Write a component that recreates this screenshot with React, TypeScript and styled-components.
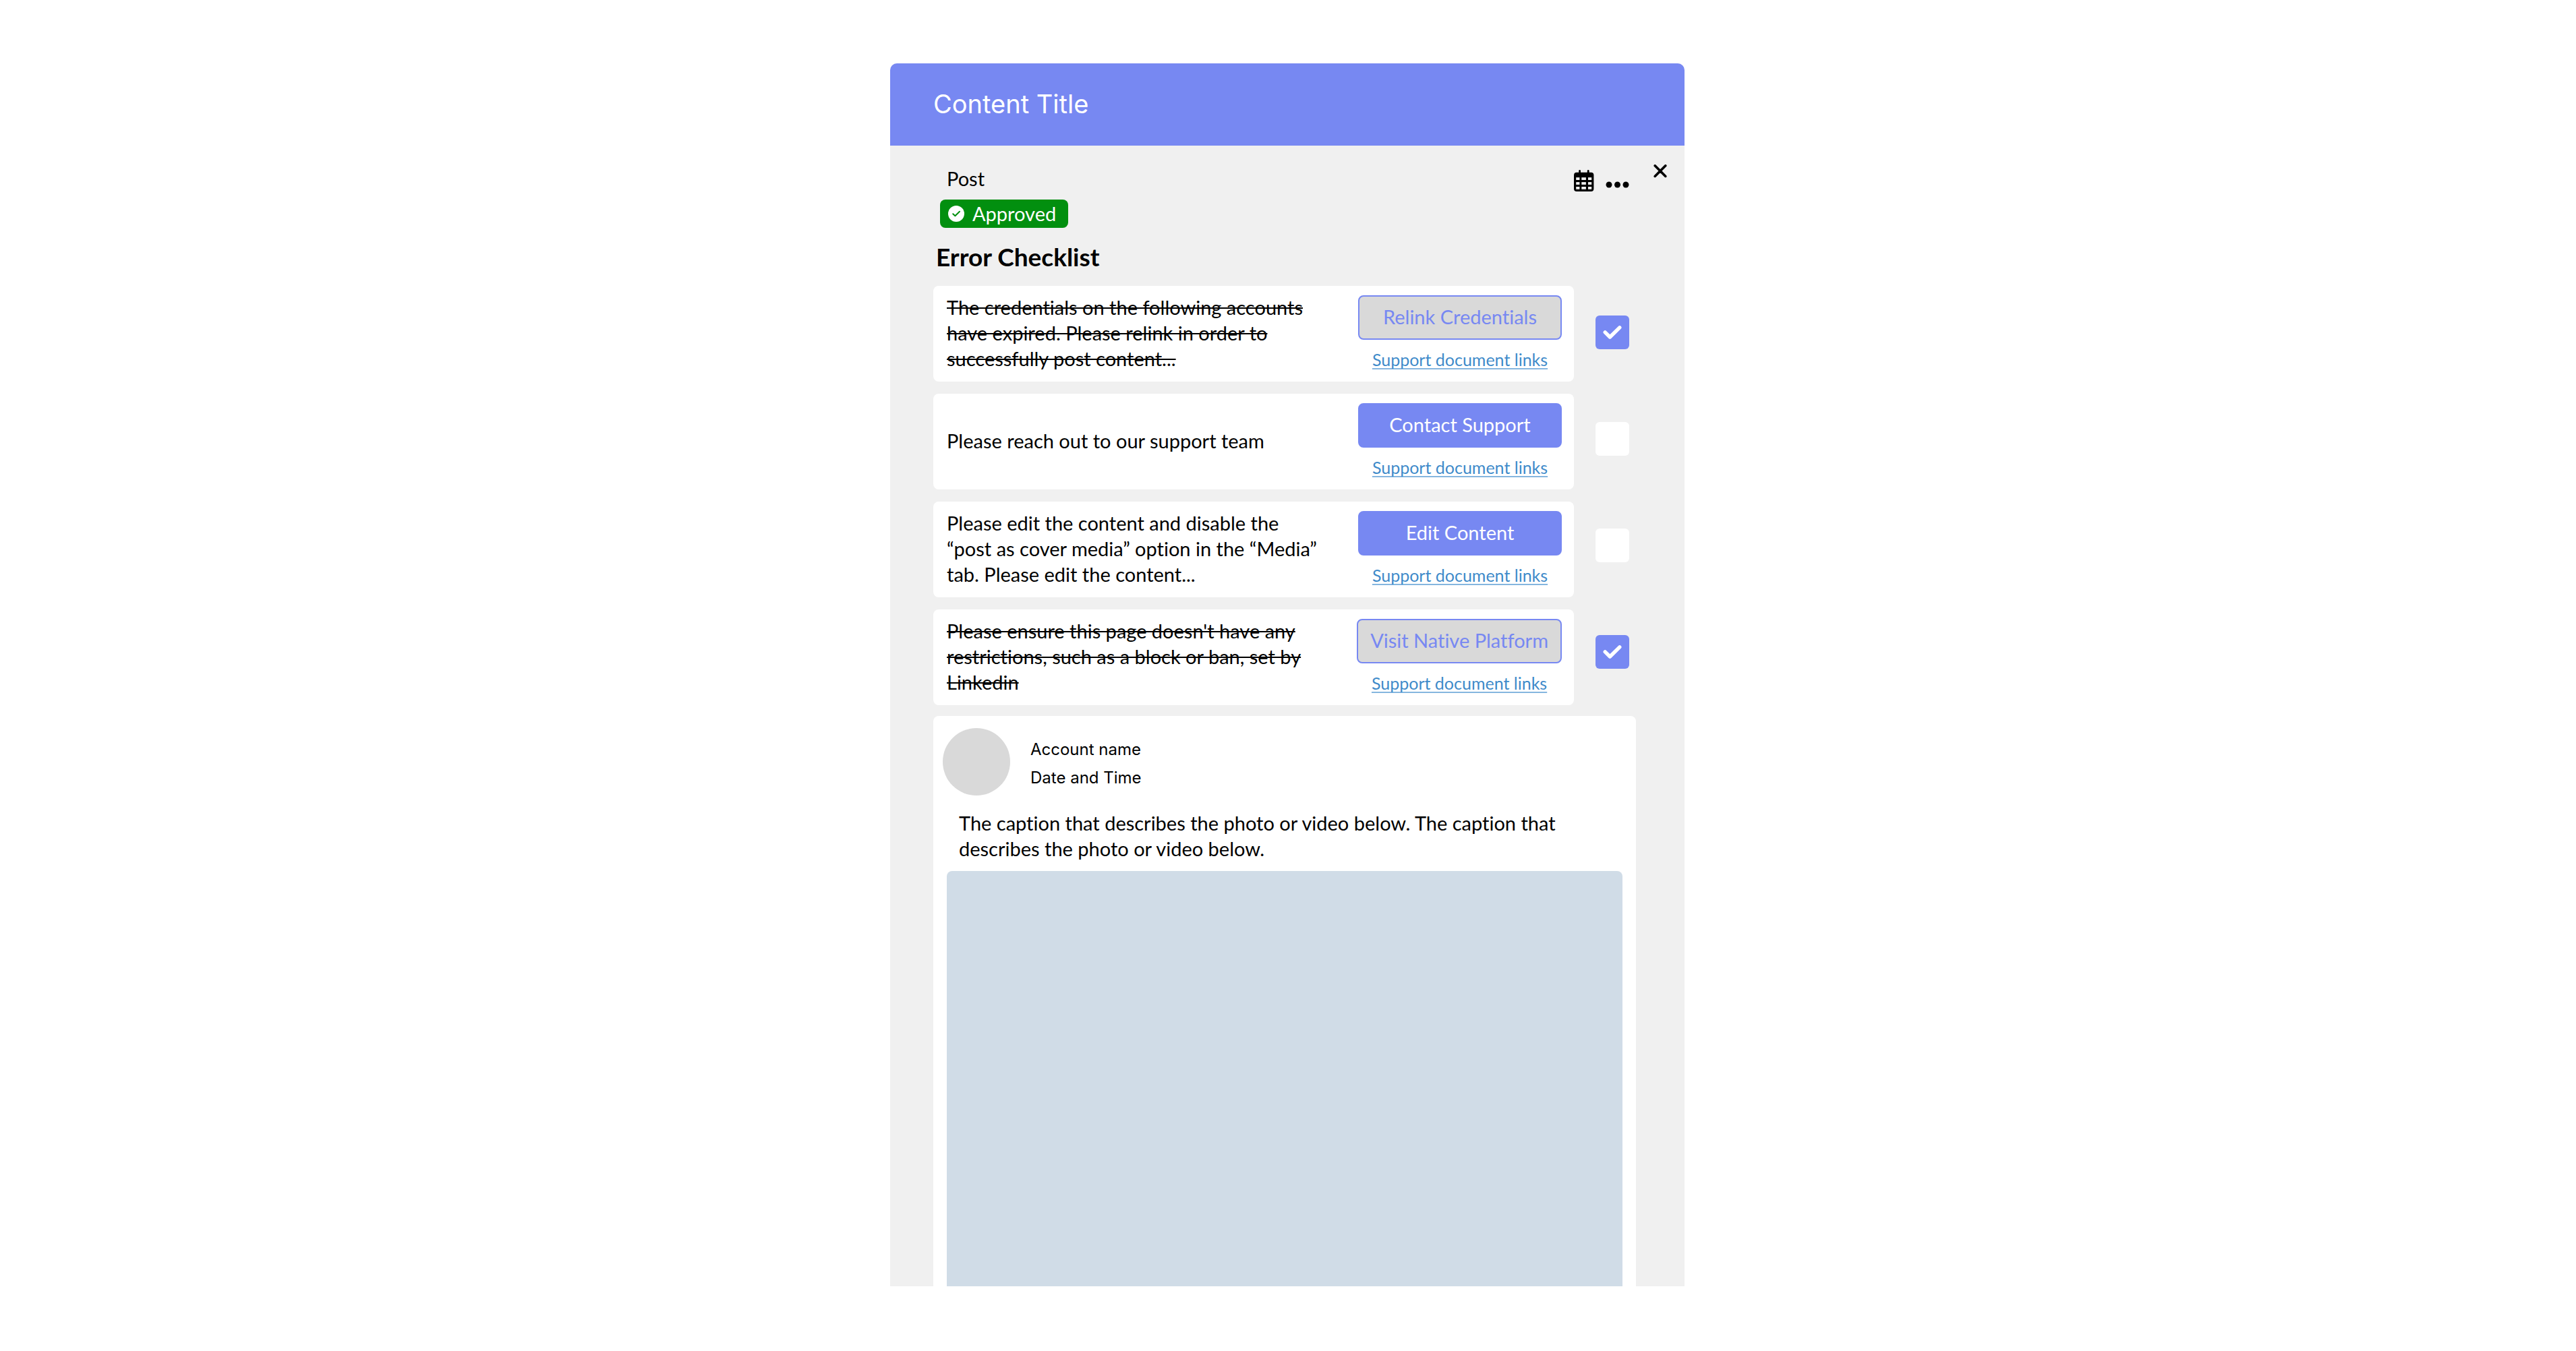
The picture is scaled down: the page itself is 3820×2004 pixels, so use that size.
import React, { useState } from "react";
import styled, { createGlobalStyle } from "styled-components";

const color = {
  brand: "#7788f2",
  panel: "#f0f0f0",
  muted: "#d9d9d9",
  success: "#028f0f",
  link: "#3f8bca",
  linkRule: "#85b6df",
  media: "#d0dce7",
};

const GlobalStyle = createGlobalStyle`
  *, *::before, *::after { box-sizing: border-box; }
  body {
    margin: 0;
    background: #fff;
    color: #000;
    font-family: Lato, "Open Sans", sans-serif;
    font-size: 29px;
    font-variant-ligatures: none;
    line-height: 38px;
  }
  h1, h2, p, ul { margin: 0; padding: 0; }
  button { font: inherit; font-variant-ligatures: none; color: inherit; cursor: pointer; }
`;

const Page = styled.div`
  display: flex;
  flex-direction: column;
  align-items: center;
  min-height: 100vh;
  padding: 94px 2px 96px 0;
`;

const Panel = styled.main`
  display: flex;
  flex-direction: column;
  flex: 1;
  width: 100%;
  max-width: 1178px;
  border-radius: 10px 10px 0 0;
  background: ${color.panel};
  overflow: hidden;
`;

const PanelHeader = styled.header`
  padding: 36px 64px 38px;
  background: ${color.brand};
  color: #fff;
`;

const PanelTitle = styled.h1`
  font-family: Inter, sans-serif;
  font-size: 38px;
  font-weight: 400;
  line-height: 48px;
`;

const Toolbar = styled.div`
  display: flex;
  justify-content: space-between;
  align-items: flex-start;
  padding: 28px 26px 0 74px;
`;

const PostMeta = styled.div`
  display: flex;
  flex-direction: column;
  align-items: flex-start;
  gap: 12px;
  padding-top: 2px;
`;

const PostKind = styled.p`
  padding-left: 10px;
`;

const StatusBadge = styled.span`
  display: inline-flex;
  align-items: center;
  gap: 12px;
  height: 42px;
  padding: 0 18px 0 12px;
  border-radius: 8px;
  background: ${color.success};
  color: #fff;
`;

const Actions = styled.div`
  display: flex;
  align-items: flex-start;
`;

const IconButton = styled.button<{ $top?: number; $gap?: number }>`
  display: flex;
  margin: ${(p) => p.$top ?? 0}px 0 0 ${(p) => p.$gap ?? 0}px;
  padding: 0;
  border: 0;
  background: none;
`;

const Content = styled.div`
  display: flex;
  flex-direction: column;
  flex: 1;
  padding: 18px 72px 0 64px;
`;

const SectionTitle = styled.h2`
  padding-left: 4px;
  font-size: 37px;
  font-weight: 700;
  line-height: 50px;
`;

const Checklist = styled.section`
  display: flex;
  gap: 32px;
  margin: 18px 0 16px;
`;

const ItemList = styled.ul`
  display: flex;
  flex: 1;
  flex-direction: column;
  gap: 18px;
  list-style: none;
`;

const Item = styled.li`
  display: flex;
  align-items: center;
  justify-content: space-between;
  gap: 20px;
  min-height: 142px;
  padding: 12px 18px 14px 20px;
  border-radius: 8px;
  background: #fff;
`;

const ItemText = styled.label<{ $done: boolean }>`
  flex: 0 1 562px;
  text-decoration: ${(p) => (p.$done ? "line-through" : "none")};
  text-decoration-thickness: 2px;
`;

const ItemActions = styled.div`
  display: flex;
  flex-direction: column;
  align-items: center;
  align-self: flex-start;
  gap: 12px;
  padding-top: 2px;
`;

const ActionButton = styled.button<{ $done: boolean }>`
  min-width: 302px;
  height: 66px;
  padding: 0 18px 2px;
  border: 2px solid ${color.brand};
  border-radius: 8px;
  background: ${(p) => (p.$done ? color.muted : color.brand)};
  color: ${(p) => (p.$done ? color.brand : "#fff")};
  white-space: nowrap;
`;

const SupportLink = styled.a`
  color: ${color.link};
  font-size: 25px;
  line-height: 34px;
  text-decoration: underline 2px ${color.linkRule};
  text-decoration-skip-ink: none;
  text-underline-offset: 3px;
`;

const CheckColumn = styled.div`
  display: flex;
  flex-direction: column;
  gap: 108px;
  width: 60px;
  padding-top: 44px;
`;

const CheckFrame = styled.span`
  display: grid;
  width: 50px;
  height: 50px;

  & > * { grid-area: 1 / 1; }
  svg { pointer-events: none; }
`;

const Checkbox = styled.input`
  appearance: none;
  width: 50px;
  height: 50px;
  margin: 0;
  border-radius: 6px;
  background: #fff;

  &:checked { background: ${color.brand}; }
`;

const PostCard = styled.article`
  display: flex;
  flex-direction: column;
  flex: 1;
  padding: 18px 20px 0;
  border-radius: 8px 8px 0 0;
  background: #fff;
`;

const Account = styled.div`
  display: flex;
  align-items: center;
  gap: 30px;
  margin-left: -6px;
`;

const Avatar = styled.div`
  width: 100px;
  height: 100px;
  border-radius: 50%;
  background: ${color.muted};
`;

const AccountInfo = styled.div`
  padding-top: 6px;
`;

const AccountLine = styled.p`
  font-family: Inter, sans-serif;
  font-size: 24px;
  line-height: 42px;
`;

const Caption = styled.p`
  padding: 22px 20px 14px 18px;
`;

const Media = styled.div`
  flex: 1;
  min-height: 400px;
  border-radius: 8px 8px 0 0;
  background: ${color.media};
`;

function ApprovedIcon() {
  return (
    <svg width="24" height="24" viewBox="0 0 24 24" aria-hidden="true">
      <circle cx="12" cy="12" r="12" fill="#fff" />
      <path d="M7.2 12.2l3.2 3.1 6.6-6.6" fill="none" stroke={color.success} strokeWidth="2" strokeLinecap="round" strokeLinejoin="round" />
    </svg>
  );
}

function CalendarIcon() {
  return (
    <svg width="30" height="32" viewBox="0 0 30 32" aria-hidden="true">
      <path d="M8.6 1.4V6M21.2 1.4V6" stroke="#000" strokeWidth="2.8" strokeLinecap="round" />
      <rect y="3.8" width="29.4" height="28.2" rx="4" />
      <g fill={color.panel}>
        {[11.2, 18.1, 25].map((y) => (
          <React.Fragment key={y}>
            <rect x="3.2" y={y} width="5.2" height="3.8" />
            <rect x="11.3" y={y} width="6.6" height="3.8" />
            <rect x="21" y={y} width="5.2" height="3.8" />
          </React.Fragment>
        ))}
      </g>
    </svg>
  );
}

function MoreIcon() {
  return (
    <svg width="35" height="10" viewBox="0 0 35 10" aria-hidden="true">
      <circle cx="5" cy="5" r="4.5" />
      <circle cx="17.5" cy="5" r="4.5" />
      <circle cx="30" cy="5" r="4.5" />
    </svg>
  );
}

function CloseIcon() {
  return (
    <svg width="20" height="20" viewBox="0 0 20 20" aria-hidden="true">
      <path d="M2.2 1.8l15.6 15.6M17.8 1.8L2.2 17.4" stroke="#000" strokeWidth="3.6" strokeLinecap="round" />
    </svg>
  );
}

function CheckIcon() {
  return (
    <svg width="50" height="50" viewBox="0 0 50 50" aria-hidden="true">
      <path d="M14.2 24.9l7.2 7.1L35.8 17.8" fill="none" stroke="#fff" strokeWidth="5.4" strokeLinecap="round" strokeLinejoin="round" />
    </svg>
  );
}

const items = [
  {
    text: "The credentials on the following accounts have expired. Please relink in order to successfully post content...",
    action: "Relink Credentials",
    done: true,
  },
  { text: "Please reach out to our support team", action: "Contact Support", done: false },
  {
    text: "Please edit the content and disable the “post as cover media” option in the “Media” tab. Please edit the content...",
    action: "Edit Content",
    done: false,
  },
  {
    text: "Please ensure this page doesn't have any restrictions, such as a block or ban, set by Linkedin",
    action: "Visit Native Platform",
    done: true,
  },
];

export default function App() {
  const [done, setDone] = useState(items.map((item) => item.done));
  const toggle = (index: number) => setDone(done.map((value, i) => (i === index ? !value : value)));

  return (
    <>
      <GlobalStyle />
      <Page>
        <Panel>
          <PanelHeader>
            <PanelTitle>Content Title</PanelTitle>
          </PanelHeader>
          <Toolbar>
            <PostMeta>
              <PostKind>Post</PostKind>
              <StatusBadge>
                <ApprovedIcon />
                Approved
              </StatusBadge>
            </PostMeta>
            <Actions>
              <IconButton type="button" aria-label="Schedule" $top={8}>
                <CalendarIcon />
              </IconButton>
              <IconButton type="button" aria-label="More options" $top={25} $gap={17}>
                <MoreIcon />
              </IconButton>
              <IconButton type="button" aria-label="Close" $gap={36}>
                <CloseIcon />
              </IconButton>
            </Actions>
          </Toolbar>
          <Content>
            <SectionTitle>Error Checklist</SectionTitle>
            <Checklist>
              <ItemList>
                {items.map((item, i) => (
                  <Item key={item.action}>
                    <ItemText htmlFor={`check-${i}`} $done={done[i]}>
                      {item.text}
                    </ItemText>
                    <ItemActions>
                      <ActionButton type="button" $done={done[i]}>
                        {item.action}
                      </ActionButton>
                      <SupportLink href="#support">Support document links</SupportLink>
                    </ItemActions>
                  </Item>
                ))}
              </ItemList>
              <CheckColumn>
                {items.map((item, i) => (
                  <CheckFrame key={item.action}>
                    <Checkbox id={`check-${i}`} type="checkbox" checked={done[i]} onChange={() => toggle(i)} />
                    {done[i] && <CheckIcon />}
                  </CheckFrame>
                ))}
              </CheckColumn>
            </Checklist>
            <PostCard>
              <Account>
                <Avatar />
                <AccountInfo>
                  <AccountLine>Account name</AccountLine>
                  <AccountLine>Date and Time</AccountLine>
                </AccountInfo>
              </Account>
              <Caption>
                The caption that describes the photo or video below. The caption that describes the photo or video below.
              </Caption>
              <Media />
            </PostCard>
          </Content>
        </Panel>
      </Page>
    </>
  );
}
